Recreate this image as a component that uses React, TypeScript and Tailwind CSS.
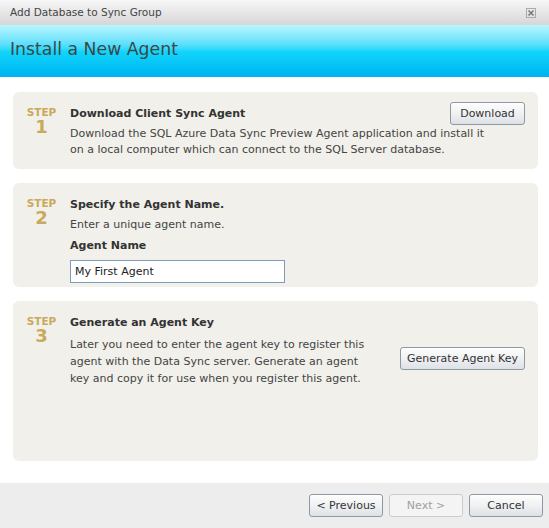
import React from "react";

const font = "font-['DejaVu_Sans',Verdana,sans-serif]";
const btn =
  "h-[23px] rounded-[3px] border border-[#8e98a4] bg-gradient-to-b from-[#fdfdfd] via-[#f0f1f3] to-[#dde1e6] text-[11px] text-[#333] leading-none shadow-[inset_0_1px_0_#fff]";

function Step({ n }: { n: number }) {
  return (
    <div className="w-[33px] shrink-0 flex flex-col items-center">
      <span className="text-[10.5px] font-bold leading-[11px] text-[#c9a95c]">STEP</span>
      <span className="text-[18px] font-bold leading-[18px] text-[#c9a95c]">{n}</span>
    </div>
  );
}

export default function App() {
  return (
    <div className={`w-[549px] h-[528px] flex flex-col bg-white ${font}`}>
      {/* window title bar */}
      <div className="h-[25px] shrink-0 flex items-center justify-between pl-[10px] pr-[13px] bg-gradient-to-b from-[#f7f7f7] to-[#d6d6d6]">
        <span className="text-[10.5px] text-[#444]">Add Database to Sync Group</span>
        <svg width="10" height="10" viewBox="0 0 10 10">
          <rect x="0.5" y="0.5" width="9" height="9" fill="none" stroke="#aaa" />
          <path d="M2.5 2.5 L7.5 7.5 M7.5 2.5 L2.5 7.5" stroke="#777" strokeWidth="1.5" />
        </svg>
      </div>

      {/* wizard header */}
      <div className="h-[52px] shrink-0 flex items-center pl-[10px] pb-[3px] bg-gradient-to-b from-[#b8f6fc] via-[#12d6fb] to-[#00b2f2]">
        <h1 className="text-[17.3px] text-[#3c4848] font-normal">Install a New Agent</h1>
      </div>

      {/* steps */}
      <div className="flex-1 flex flex-col gap-[14px] pl-[13px] pr-[11px] pt-[15px]">
        <div className="h-[77px] rounded-[6px] bg-[#f1f0ea] flex pl-[12px] pr-[13px] pt-[15px]">
          <Step n={1} />
          <div className="flex-1 pl-[12px]">
            <div className="flex items-start justify-between">
              <div className="text-[11px] font-bold text-[#333] leading-[13px]">Download Client Sync Agent</div>
              <button className={`${btn} w-[75px] -mt-[5px]`}>Download</button>
            </div>
            <p className="text-[11px] text-[#444] leading-[16px] mt-[1px]">
              Download the SQL Azure Data Sync Preview Agent application and install it
              <br />
              on a local computer which can connect to the SQL Server database.
            </p>
          </div>
        </div>

        <div className="h-[104px] rounded-[6px] bg-[#f1f0ea] flex pl-[12px] pr-[13px] pt-[15px]">
          <Step n={2} />
          <div className="flex-1 pl-[12px]">
            <div className="text-[11px] font-bold text-[#333] leading-[13px]">Specify the Agent Name.</div>
            <p className="text-[11px] text-[#444] leading-[16px] mt-[6px]">Enter a unique agent name.</p>
            <div className="text-[11px] font-bold text-[#333] leading-[13px] mt-[6px]">Agent Name</div>
            <input
              defaultValue="My First Agent"
              className="mt-[8px] w-[215px] h-[23px] border border-[#7f9db9] bg-white px-[4px] text-[11px] text-[#222] outline-none"
            />
          </div>
        </div>

        <div className="h-[160px] rounded-[6px] bg-[#f1f0ea] flex pl-[12px] pr-[13px] pt-[15px]">
          <Step n={3} />
          <div className="flex-1 pl-[12px] flex items-start">
            <div className="flex-1">
              <div className="text-[11px] font-bold text-[#333] leading-[13px]">Generate an Agent Key</div>
              <p className="text-[11px] text-[#444] leading-[17px] mt-[7px]">
                Later you need to enter the agent key to register this
                <br />
                agent with the Data Sync server. Generate an agent
                <br />
                key and copy it for use when you register this agent.
              </p>
            </div>
            <button className={`${btn} w-[125px] mt-[31px]`}>Generate Agent Key</button>
          </div>
        </div>
      </div>

      {/* footer */}
      <div className="h-[45px] shrink-0 bg-[#ededed] flex items-center justify-end gap-[6px] pr-[6px]">
        <button className={`${btn} w-[74px]`}>&lt; Previous</button>
        <button className="h-[23px] w-[74px] rounded-[3px] border border-[#c8ccd0] bg-[#f4f4f4] text-[11px] text-[#a0a0a0] leading-none">
          Next &gt;
        </button>
        <button className={`${btn} w-[74px]`}>Cancel</button>
      </div>
    </div>
  );
}
